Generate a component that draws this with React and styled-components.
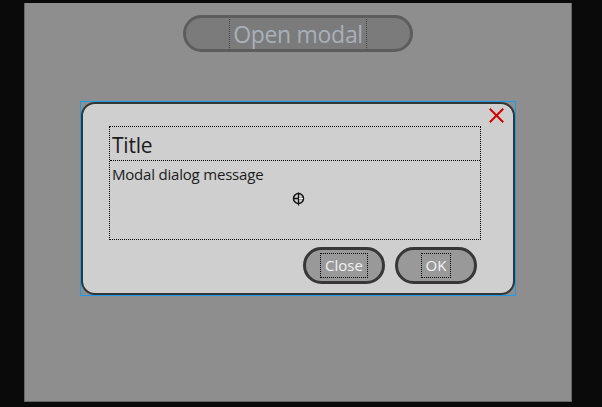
import React from 'react'
import styled, { createGlobalStyle } from 'styled-components'

const GlobalStyle = createGlobalStyle`
    html, body {
        margin: 0;
        padding: 0;
        background: #0a0a0a;
        font-family: "Open Sans", "Noto Sans", sans-serif;
    }
`

const App = () => {
    return (
        <>
            <GlobalStyle />
            <Stage>
                <OpenButton>
                    <Label>Open modal</Label>
                </OpenButton>

                <Dialog>
                    <Card>
                        <CloseIcon aria-label="close">
                            <svg width="15" height="15" viewBox="0 0 15 15">
                                <path d="M1.5 1.5 L13.5 13.5 M13.5 1.5 L1.5 13.5" stroke="#d40000" strokeWidth="2" strokeLinecap="square" />
                            </svg>
                        </CloseIcon>
                        <Content>
                            <Title>Title</Title>
                            <Message>
                                Modal dialog message
                                <Cursor>
                                    <svg width="13" height="14" viewBox="0 0 13 14">
                                        <circle cx="6.5" cy="6.5" r="5" fill="none" stroke="#111" strokeWidth="1.5" />
                                        <path d="M6.5 0.5 V13.5 M1.5 6.5 H11.5" stroke="#111" strokeWidth="1.3" />
                                        <path d="M7 6.5 H11" stroke="#fff" strokeWidth="1" />
                                    </svg>
                                </Cursor>
                            </Message>
                        </Content>
                        <Footer>
                            <ActionButton>
                                <ActionLabel>Close</ActionLabel>
                            </ActionButton>
                            <ActionButton>
                                <ActionLabel>OK</ActionLabel>
                            </ActionButton>
                        </Footer>
                    </Card>
                </Dialog>
            </Stage>
        </>
    )
}

export default App


// # Styled-components
const Stage = styled.div`
    box-sizing: border-box;
    width: 548px;
    height: 399px;
    margin: 3px 0 0 24px;
    background: #8e8e8e;
    border: 1px solid #666;
    border-top: none;
    display: flex;
    flex-direction: column;
    align-items: center;
    padding-top: 12px;
`

const OpenButton = styled.button`
    box-sizing: border-box;
    width: 230px;
    height: 37px;
    border: 3px solid #5d5d5d;
    border-radius: 19px;
    background: #7b7b7b;
    display: flex;
    align-items: center;
    justify-content: center;
    padding: 2px 0 0;
    cursor: pointer;
`

const Label = styled.span`
    font-family: "Open Sans", sans-serif;
    font-size: 23px;
    line-height: 31px;
    color: #a7b1ba;
    border-left: 1px dotted #444;
    border-right: 1px dotted #444;
    padding: 0 3px;
    letter-spacing: -0.3px;
`

const Dialog = styled.div`
    box-sizing: border-box;
    width: 436px;
    height: 195px;
    margin-top: 49px;
    border: 1px solid #189cf0;
    background: #8e8e8e;
`

const Card = styled.div`
    position: relative;
    box-sizing: border-box;
    height: 100%;
    background: #cfcfcf;
    border: 2px solid #353535;
    border-radius: 14px;
    padding: 22px 32px 10px 26px;
    display: flex;
    flex-direction: column;
`

const CloseIcon = styled.div`
    position: absolute;
    top: 4px;
    right: 9px;
    width: 15px;
    height: 15px;
    line-height: 0;
`

const Content = styled.div`
    border: 1px dotted #000;
    display: flex;
    flex-direction: column;
`

const Title = styled.div`
    height: 33px;
    border-bottom: 1px dotted #000;
    font-size: 21px;
    line-height: 36px;
    color: #1c1c1c;
    padding-left: 2px;
    letter-spacing: -0.2px;
`

const Message = styled.div`
    position: relative;
    height: 78px;
    font-size: 15px;
    line-height: 26px;
    color: #1c1c1c;
    padding-left: 2px;
    letter-spacing: -0.2px;
`

const Cursor = styled.span`
    position: absolute;
    left: 182px;
    top: 31px;
    line-height: 0;
`

const Footer = styled.div`
    display: flex;
    justify-content: flex-end;
    gap: 10px;
    margin-top: 7px;
    padding-right: 4px;
`

const ActionButton = styled.button`
    box-sizing: border-box;
    width: 82px;
    height: 37px;
    border: 3px solid #373737;
    border-radius: 19px;
    background: #999;
    display: flex;
    align-items: center;
    justify-content: center;
    padding: 0;
    cursor: pointer;
`

const ActionLabel = styled.span`
    font-family: "Open Sans", sans-serif;
    font-size: 15px;
    line-height: 23px;
    color: #f2f2f2;
    border: 1px dotted #000;
    padding: 0 4px;
`
